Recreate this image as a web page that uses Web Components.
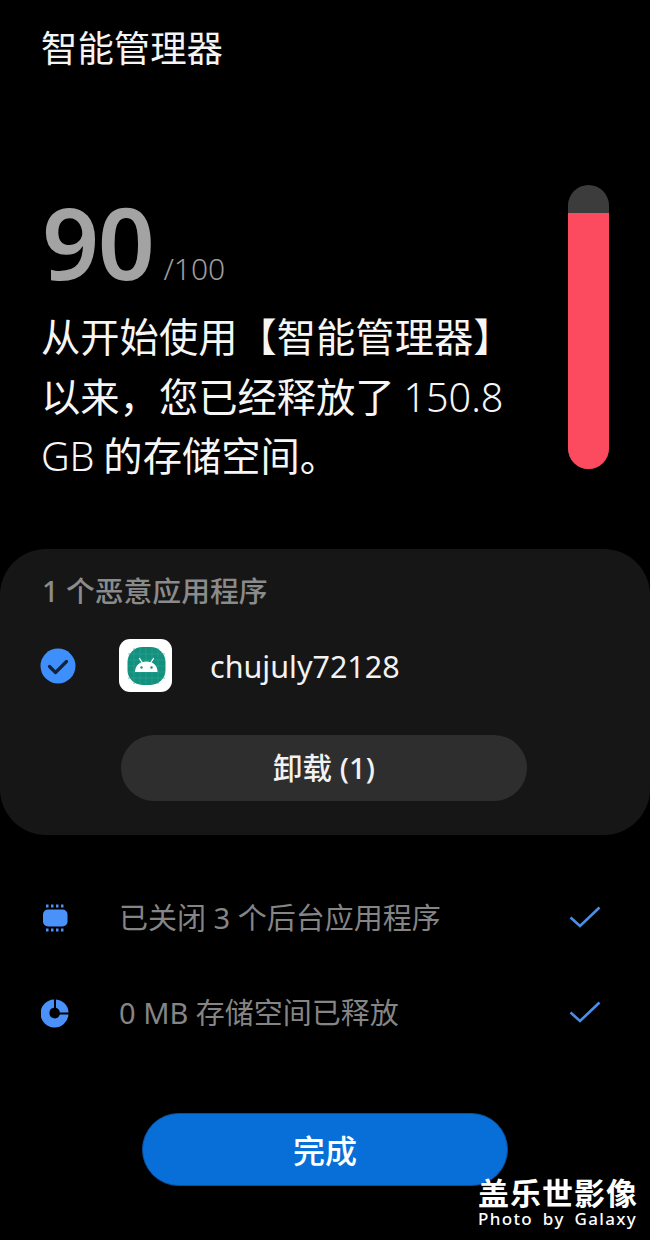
<!DOCTYPE html>
<html lang="zh-CN">
<head>
<meta charset="utf-8">
<title>智能管理器</title>
<style>
html,body{margin:0;padding:0;background:#000;}
body{width:650px;height:1240px;overflow:hidden;font-family:"Noto Sans","Noto Sans CJK SC",sans-serif;color:#fff;position:relative;}
</style>
</head>
<body>
<care-screen></care-screen>
<script>
const FONT = '"Noto Sans","Noto Sans CJK SC",sans-serif';
function define(name, css, html){
  customElements.define(name, class extends HTMLElement{
    constructor(){
      super();
      const r=this.attachShadow({mode:'open'});
      r.innerHTML='<style>'+css+'</style>'+html;
    }
  });
}
define('score-bar',`
:host{display:flex;flex-direction:column;width:41px;height:284px;border-radius:21px;overflow:hidden;background:#3c3c3c;flex:none;}
.fill{margin-top:28px;flex:1;background:#fc4a5e;}
`,`<div class="fill"></div>`);

define('score-panel',`
:host{display:flex;justify-content:space-between;align-items:flex-start;padding:0 41px 0 41px;height:284px;}
.left{display:flex;flex-direction:column;margin-top:-2px;}
.score{display:flex;align-items:baseline;height:116px;line-height:116px;margin-left:1px;}
.n{font:600 100px/116px "Noto Sans",sans-serif;color:#a3a3a3;letter-spacing:-1.5px;}
.of{font:300 30px/116px "Noto Sans",sans-serif;color:#9c9c9c;margin-left:10px;}
.msg{font:400 39.3px/59.5px "Noto Sans CJK SC",sans-serif;color:#f6f6f6;margin-top:6px;white-space:nowrap;margin-left:0;}
.num{font-family:"Noto Sans",sans-serif;font-weight:300;font-size:39.5px;line-height:1;}
`,`<div class="left">
  <div class="score"><span class="n">90</span><span class="of">/100</span></div>
  <div class="msg">从开始使用【智能管理器】<br>以来，您已经释放了 <span class="num">150.8</span><br><span class="num">GB</span> 的存储空间。</div>
</div>
<score-bar></score-bar>`);

define('check-badge',`
:host{display:block;width:36px;height:36px;flex:none;}
svg{display:block}
`,`<svg width="36" height="36" viewBox="0 0 36 36"><circle cx="18" cy="18" r="17.5" fill="#3e8ffb"/><path d="M9.5 18.5l6 6 11-11" fill="none" stroke="#14233a" stroke-width="3.2" stroke-linecap="round" stroke-linejoin="round"/></svg>`);

define('app-icon',`
:host{display:block;width:53px;height:53px;flex:none;}
svg{display:block}
`,`<svg width="53" height="53" viewBox="0 0 53 53">
<rect width="53" height="53" rx="11" fill="#fff"/>
<rect x="8.500" y="8" width="38" height="38" rx="15" fill="#13917f"/>
<g stroke="#2fa593" stroke-width=".6"><path d="M9 15h37M9 21h37M9 27h37M9 33h37M9 39h37M15 9v36M21 9v36M27 9v36M33 9v36M39 9v36"/></g>
<path d="M16 33c0-6.500 5-10.500 11.500-10.500S38.500 26.500 38.500 33z" fill="#fff"/>
<path d="M20.500 19.500l3 4.500M34.500 19.500l-3 4.500" stroke="#fff" stroke-width="1.300" stroke-linecap="round"/>
<circle cx="22.500" cy="28.500" r="1.200" fill="#13917f"/><circle cx="32.500" cy="28.500" r="1.200" fill="#13917f"/>
</svg>`);

define('pill-button',`
:host{display:flex;align-items:center;justify-content:center;box-sizing:border-box;font-family:${FONT};}
`,`<slot></slot>`);

define('scan-card',`
:host{display:flex;flex-direction:column;background:#161616;border-radius:46px;height:286px;box-sizing:border-box;padding:24px 0 0;}
.h{font:500 28.800px/36px "Noto Sans","Noto Sans CJK SC",sans-serif;color:#8b8b8b;padding-left:42px;}
.row{display:flex;align-items:center;margin-top:30px;padding-left:40px;height:53px;}
app-icon{margin-left:43px;}
.name{font:400 30.500px/40px "Noto Sans",sans-serif;color:#f2f2f2;margin-left:38px;}
pill-button{margin:43px 0 0 121px;width:406px;height:66px;border-radius:33px;background:#2e2e2e;color:#f2f2f2;font:500 29.500px/40px "Noto Sans","Noto Sans CJK SC",sans-serif;}
`,`<div class="h">1 个恶意应用程序</div>
<div class="row"><check-badge></check-badge><app-icon></app-icon><span class="name">chujuly72128</span></div>
<pill-button>卸载 (1)</pill-button>`);

define('result-row',`
:host{display:flex;align-items:center;height:40px;padding-left:41px;padding-right:49px;font:400 29px/40px "Noto Sans","Noto Sans CJK SC",sans-serif;color:#858585;}
.ic{width:28px;height:30px;flex:none;display:flex;align-items:center}
.t{margin-left:50px;flex:1;white-space:nowrap}
svg{display:block;flex:none}
`,`<div class="ic"><slot name="icon"></slot></div><div class="t"><slot></slot></div>
<svg width="32" height="26" viewBox="0 0 32 26"><path d="M1.500 12.500l9.500 8.500L30.500 2.500" fill="none" stroke="#4a8fe6" stroke-width="2.600" stroke-linejoin="miter"/></svg>`);

define('photo-mark',`
:host{position:absolute;left:478px;top:1175px;width:162px;display:block;color:#fff;text-align:left;}
.a{font:700 31px/34px "Noto Sans CJK SC",sans-serif;letter-spacing:1px;white-space:nowrap;}
.b{font:500 17px/20px "Noto Sans",sans-serif;letter-spacing:1.350px;word-spacing:4px;white-space:nowrap;margin-top:0;}
`,`<div class="a">盖乐世影像</div><div class="b">Photo by Galaxy</div>`);

define('care-screen',`
:host{display:flex;flex-direction:column;width:650px;height:1240px;background:#000;font-family:${FONT};}
.title{font:400 36.400px/50px "Noto Sans CJK SC",sans-serif;color:#f4f4f4;padding:21px 0 0 41px;}
score-panel{margin-top:114px;}
scan-card{margin-top:80px;}
.rows{display:flex;flex-direction:column;gap:55px;margin-top:63px;}
pill-button.done{align-self:flex-start;margin:80px 0 0 142px;width:366px;height:73px;border-radius:37px;background:#086fd9;border:1px solid #0a4f9c;color:#fff;font:500 32px/40px "Noto Sans CJK SC",sans-serif;padding-bottom:2px;}
`,`<div class="title">智能管理器</div>
<score-panel></score-panel>
<scan-card></scan-card>
<div class="rows">
  <result-row>
    <svg slot="icon" width="28" height="30" viewBox="0 0 28 30"><rect x="2" y="6.500" width="24.500" height="17" rx="5" fill="#4a92fa"/><g fill="#4a92fa"><rect x="5" y="1.500" width="2.500" height="3"/><rect x="10" y="1.500" width="2.500" height="3"/><rect x="15" y="1.500" width="2.500" height="3"/><rect x="20" y="1.500" width="2.500" height="3"/><rect x="5" y="25.500" width="2.500" height="3"/><rect x="10" y="25.500" width="2.500" height="3"/><rect x="15" y="25.500" width="2.500" height="3"/><rect x="20" y="25.500" width="2.500" height="3"/></g></svg>
    已关闭 3 个后台应用程序
  </result-row>
  <result-row>
    <svg slot="icon" width="28" height="30" viewBox="0 0 28 30"><path fill-rule="evenodd" fill="#4a92fa" d="M13 1.500v8.300a5.300 5.300 0 1 0 5.800 6.800h8.700A14 14 0 1 1 13 1.500z"/><path fill="#4a92fa" d="M15 1.500A13.500 13.500 0 0 1 27.500 14.500h-8.700A5.500 5.500 0 0 0 15 9.800z"/></svg>
    0 MB 存储空间已释放
  </result-row>
</div>
<pill-button class="done">完成</pill-button>
<photo-mark></photo-mark>`);
</script>
</body>
</html>
